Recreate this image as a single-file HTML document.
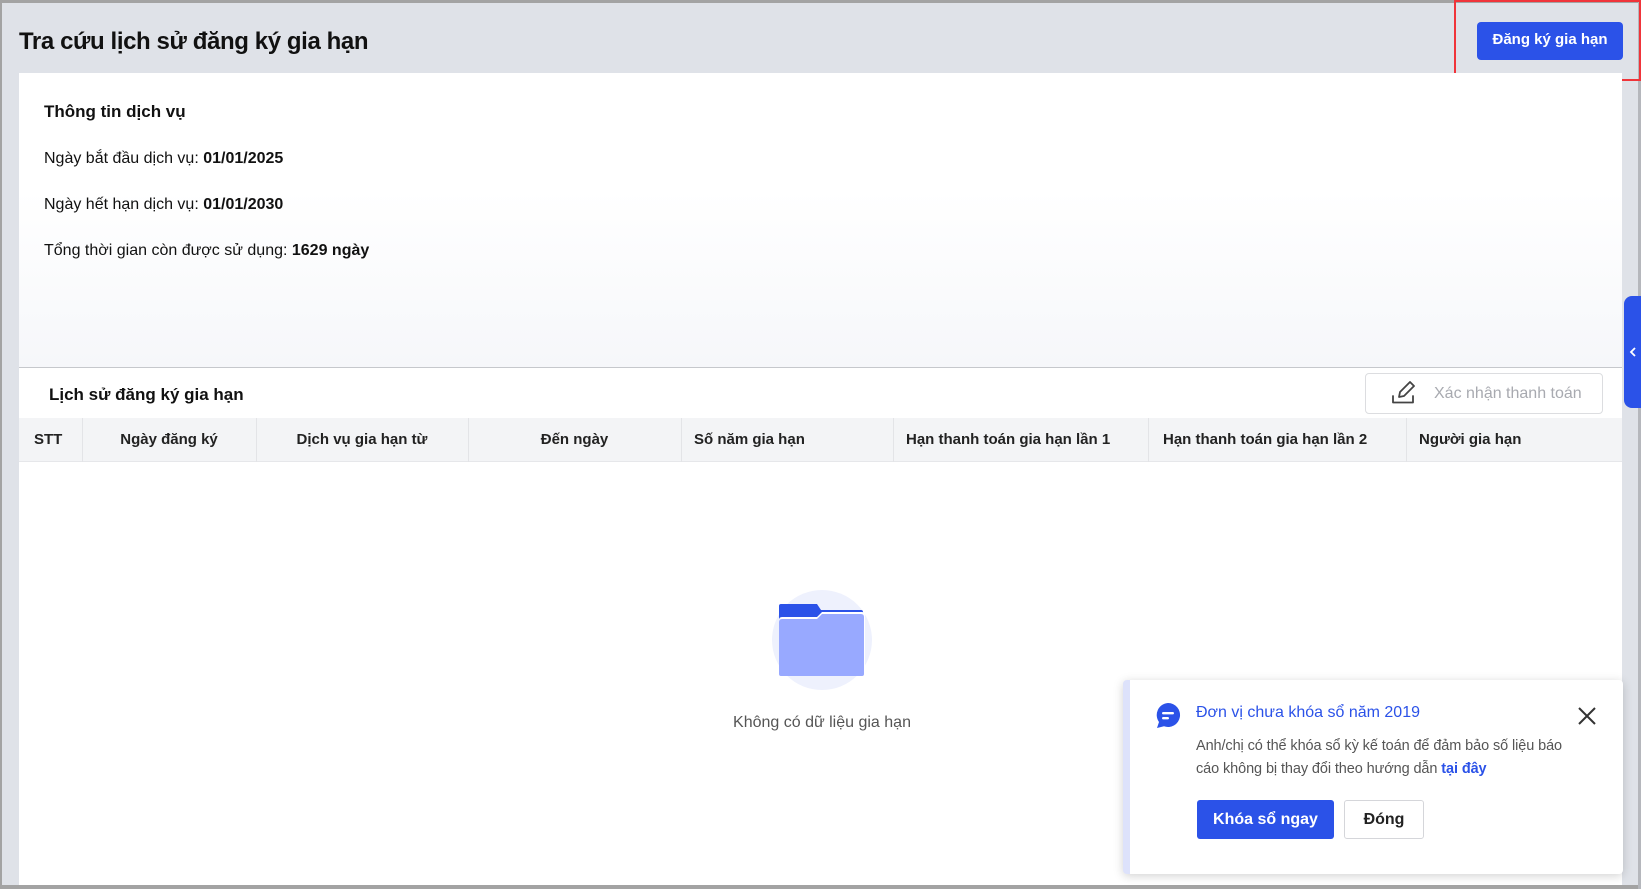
<!DOCTYPE html>
<html><head><meta charset="utf-8"><style>
*{box-sizing:border-box;margin:0;padding:0}
body{width:1641px;height:889px;overflow:hidden;background:#dfe2e8;font-family:"Liberation Sans",sans-serif;color:#111;position:relative}
.abs{position:absolute}
.t{white-space:nowrap}
</style></head><body>
<div class="abs" style="left:0;top:0;width:1641px;height:3px;background:#a3a3a3"></div>
<div class="abs" style="left:0;top:0;width:2px;height:889px;background:#a3a3a3"></div>
<div class="abs" style="left:0;top:885px;width:1641px;height:4px;background:#a3a3a3"></div>
<div class="abs" style="left:1638px;top:0;width:3px;height:889px;background:#b5b7bc"></div>

<div class="abs t" style="left:19px;top:27px;font-size:24px;font-weight:bold;line-height:30px;letter-spacing:-0.4px">Tra cứu lịch sử đăng ký gia hạn</div>
<div class="abs t" style="left:1477px;top:22px;width:146px;height:38px;background:#2b52e8;border-radius:4px;color:#fff;font-size:15px;font-weight:bold;text-align:center;line-height:36px">Đăng ký gia hạn</div>
<div class="abs" style="left:1454px;top:0;width:187px;height:81px;border:2px solid #f0343a"></div>

<div class="abs" style="left:19px;top:73px;width:1603px;height:294px;background:linear-gradient(#fff 40%,#f6f7fa)"></div>
<div class="abs" style="left:19px;top:367px;width:1603px;height:1px;background:#c6c8cc"></div>
<div class="abs" style="left:19px;top:368px;width:1603px;height:517px;background:#fff"></div>

<div class="abs t" style="left:44px;top:102px;font-size:17px;font-weight:bold">Thông tin dịch vụ</div>
<div class="abs t" style="left:44px;top:150px;font-size:16px">Ngày bắt đầu dịch vụ: <b>01/01/2025</b></div>
<div class="abs t" style="left:44px;top:196px;font-size:16px">Ngày hết hạn dịch vụ: <b>01/01/2030</b></div>
<div class="abs t" style="left:44px;top:242px;font-size:16px">Tổng thời gian còn được sử dụng: <b>1629 ngày</b></div>

<div class="abs t" style="left:49px;top:385px;font-size:17px;font-weight:bold">Lịch sử đăng ký gia hạn</div>
<div class="abs" style="left:1365px;top:373px;width:238px;height:41px;border:1px solid #dcdde0;border-radius:4px;background:#fff"></div>
<svg class="abs" style="left:1391px;top:380px" width="26" height="26" viewBox="0 0 26 26" fill="none" stroke="#444" stroke-width="1.8" stroke-linejoin="round" stroke-linecap="round"><path d="M2 16v6.5h20V16"/><path d="M8 17l1-5 10-10 4 4-10 10z"/></svg>
<div class="abs t" style="left:1434px;top:385px;font-size:16px;color:#a8aab0">Xác nhận thanh toán</div>

<div class="abs" style="left:19px;top:418px;width:1603px;height:44px;background:#f3f4f6;border-bottom:1px solid #e6e7ea"></div>
<div class="abs" style="left:82px;top:418px;width:1px;height:44px;background:#e3e4e7"></div>
<div class="abs" style="left:256px;top:418px;width:1px;height:44px;background:#e3e4e7"></div>
<div class="abs" style="left:468px;top:418px;width:1px;height:44px;background:#e3e4e7"></div>
<div class="abs" style="left:681px;top:418px;width:1px;height:44px;background:#e3e4e7"></div>
<div class="abs" style="left:893px;top:418px;width:1px;height:44px;background:#e3e4e7"></div>
<div class="abs" style="left:1148px;top:418px;width:1px;height:44px;background:#e3e4e7"></div>
<div class="abs" style="left:1406px;top:418px;width:1px;height:44px;background:#e3e4e7"></div>
<div style="font-size:15px;font-weight:bold;color:#222">
<div class="abs t" style="left:34px;top:431px">STT</div>
<div class="abs t" style="left:82px;width:174px;text-align:center;top:431px">Ngày đăng ký</div>
<div class="abs t" style="left:256px;width:212px;text-align:center;top:431px">Dịch vụ gia hạn từ</div>
<div class="abs t" style="left:468px;width:213px;text-align:center;top:431px">Đến ngày</div>
<div class="abs t" style="left:694px;top:431px">Số năm gia hạn</div>
<div class="abs t" style="left:906px;top:431px">Hạn thanh toán gia hạn lần 1</div>
<div class="abs t" style="left:1163px;top:431px">Hạn thanh toán gia hạn lần 2</div>
<div class="abs t" style="left:1419px;top:431px">Người gia hạn</div>
</div>

<div class="abs" style="left:1624px;top:296px;width:17px;height:112px;background:#2b52e8;border-radius:8px 0 0 8px"></div>
<svg class="abs" style="left:1628px;top:346px" width="10" height="12" viewBox="0 0 10 12"><path d="M7 2L3 6l4 4" stroke="#fff" stroke-width="1.8" fill="none"/></svg>

<svg class="abs" style="left:772px;top:590px" width="100" height="100" viewBox="0 0 100 100">
<circle cx="50" cy="50" r="50" fill="#eef1fd"/>
<path d="M7 16q0-2 2-2h36l4 6h40q2 0 2 2v14H7z" fill="#2b52e8"/>
<path d="M7 30q0-3 3-3h35l5-5h40q3 0 3 3v58q0 3-3 3H10q-3 0-3-3z" fill="#fff"/>
<path d="M7 32q0-3 3-3h35l5-5h39q3 0 3 3v57q0 2-2 2H9q-2 0-2-2z" fill="#98a9ff"/>
</svg>
<div class="abs t" style="left:672px;top:714px;width:300px;text-align:center;font-size:16px;color:#555">Không có dữ liệu gia hạn</div>

<div class="abs" style="left:1123px;top:680px;width:500px;height:194px;background:#fff;border-radius:4px;box-shadow:0 2px 10px rgba(0,0,0,.18);border-left:7px solid #dde2fb"></div>
<svg class="abs" style="left:1155px;top:702px" width="26" height="27" viewBox="0 0 26 27"><path d="M13 1a12 12 0 1 1-4 23.3L2 26l2-6A12 12 0 0 1 13 1z" fill="#2b52e8"/><rect x="7" y="10" width="12" height="2.4" rx="1.2" fill="#fff"/><rect x="7" y="15" width="7" height="2.4" rx="1.2" fill="#fff"/></svg>
<div class="abs t" style="left:1196px;top:704px;font-size:16px;color:#2b52e8">Đơn vị chưa khóa sổ năm 2019</div>
<svg class="abs" style="left:1577px;top:706px" width="20" height="20" viewBox="0 0 20 20"><path d="M2 2l16 16M18 2L2 18" stroke="#333" stroke-width="2"/></svg>
<div class="abs" style="left:1196px;top:735px;width:378px;font-size:14.5px;color:#555;line-height:23px;letter-spacing:-0.1px">Anh/chị có thể khóa sổ kỳ kế toán để đảm bảo số liệu báo cáo không bị thay đổi theo hướng dẫn <b style="color:#2b52e8">tại đây</b></div>
<div class="abs t" style="left:1197px;top:800px;width:137px;height:39px;background:#2b52e8;border-radius:3px;color:#fff;font-size:16px;font-weight:bold;text-align:center;line-height:39px">Khóa sổ ngay</div>
<div class="abs t" style="left:1344px;top:800px;width:80px;height:39px;border:1px solid #d5d6da;border-radius:3px;background:#fff;font-size:16px;font-weight:bold;text-align:center;line-height:37px;color:#222">Đóng</div>
</body></html>
